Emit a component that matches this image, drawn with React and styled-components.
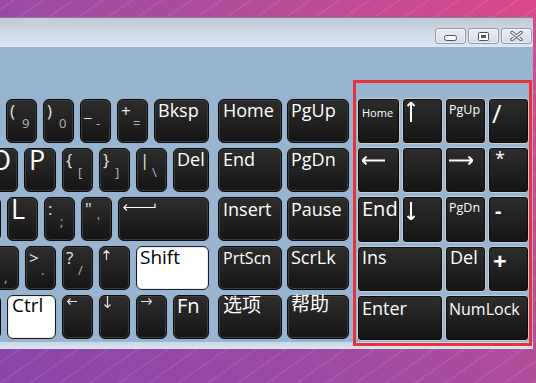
import styled, { createGlobalStyle, css } from 'styled-components';

const GlobalStyle = createGlobalStyle`
  html, body { margin: 0; padding: 0; }
  body {
    width: 536px;
    height: 383px;
    overflow: hidden;
    font-family: "Open Sans", "Noto Sans CJK SC", sans-serif;
  }
`;

const Desktop = styled.div`
  position: relative;
  box-sizing: border-box;
  width: 536px;
  height: 383px;
  padding-top: 17px;
  overflow: hidden;
  background:
    repeating-linear-gradient(145deg, rgba(255,255,255,0) 0 7px, rgba(255,255,255,0.07) 7px 9px, rgba(255,255,255,0) 9px 17px),
    linear-gradient(50deg, #8a46aa 0%, #9c4aa2 40%, #b24c9a 65%, #dc478b 100%);
`;

const Window = styled.div`
  width: 533px;
  display: flex;
  flex-direction: column;
`;

const TitleBar = styled.div`
  box-sizing: border-box;
  height: 30px;
  display: flex;
  justify-content: flex-end;
  align-items: flex-start;
  gap: 2px;
  padding: 10px 1px 0 0;
  border-top: 1px solid #8a8398;
  background: linear-gradient(#c0cad6, #d3deea 60%, #dde8f4);
`;

const CaptionButton = styled.div`
  box-sizing: border-box;
  width: 31px;
  height: 16px;
  display: flex;
  align-items: center;
  justify-content: center;
  border: 1px solid #8e9bab;
  border-radius: 3px;
  background: linear-gradient(#eaeff5, #d2dbe6);
  box-shadow: inset 0 0 0 1px rgba(255, 255, 255, 0.55);
`;

const Panel = styled.div`
  box-sizing: border-box;
  height: 295px;
  display: flex;
  align-items: flex-start;
  gap: 8px;
  padding: 51px 4px 0 0;
  background: #98b4d1;
`;

const BottomEdge = styled.div`
  height: 7px;
  background: linear-gradient(#c9d7e6, #dbe5ef);
`;

const MainKeys = styled.div`
  flex: none;
  width: 209px;
  margin-right: 1px;
  padding-top: 1px;
  display: flex;
  flex-direction: column;
  gap: 5px;
`;

const Row = styled.div`
  display: flex;
  justify-content: flex-end;
  gap: 6px;
`;

const NavKeys = styled.div`
  flex: none;
  padding-top: 1px;
  display: grid;
  grid-template-columns: 64px 62px;
  grid-auto-rows: 44px;
  gap: 5px;
`;

const Numpad = styled.div`
  flex: none;
  height: 243px;
  display: grid;
  grid-template-columns: 43px 41px 41px 41px;
  grid-template-rows: repeat(5, 1fr);
  gap: 3px 2px;
`;

const keyFace = css`
  box-sizing: border-box;
  white-space: nowrap;
  color: #fff;
  background: linear-gradient(#2d2d2d, #222 45%, #151515);
`;

const Key = styled.div`
  ${keyFace}
  flex: none;
  ${p => p.$w && `width: ${p.$w}px;`}
  height: 44px;
  border: 1px solid #0a0a0a;
  border-radius: 6px;
  box-shadow: inset 0 0 0 1px #3c3c3c;
  ${p => p.$white && css`
    background: #fff;
    color: #000;
    border-color: #1c1c1c;
    box-shadow: inset 0 0 0 1px #ececec;
  `}
`;

const NumKey = styled.div`
  ${keyFace}
  grid-column: span ${p => p.$span || 1};
  border: 1px solid #c4ccd6;
  border-radius: 4px;
  box-shadow: inset 0 0 0 1px #0e0e0e;
`;

// baseline of a line box in Open Sans sits at fs * (lh / 2 + 0.388) from its top
const Label = styled.span`
  display: block;
  font-size: ${p => p.$fs || 18}px;
  line-height: ${p => p.$lh || 1};
  margin-top: ${p => ((p.$base ?? 17) - (p.$fs || 18) * ((p.$lh || 1) / 2 + 0.388)).toFixed(1)}px;
  padding-left: ${p => p.$pl ?? 3}px;
  font-weight: ${p => (p.$bold ? 700 : 400)};
  color: ${p => (p.$dim ? '#e4e4e4' : 'inherit')};
`;

const Sub = styled.span`
  display: block;
  font-size: 13px;
  line-height: 0.75;
  margin-top: -0.2px;
  padding-left: 15px;
  color: #b6b6b6;
`;

const Glyph = styled.svg`
  display: block;
  margin: ${p => p.$top}px 0 0 ${p => p.$left}px;
  color: ${p => p.$color || '#fff'};
`;

const Highlight = styled.div`
  position: absolute;
  left: 353px;
  top: 80px;
  width: 179px;
  height: 266px;
  box-sizing: border-box;
  border: 3px solid #e5353b;
  pointer-events: none;
`;

function Arrow({ dir, len, head = 3, sw = 1.2, top = 0, left = 0, color }) {
  const horiz = dir === 'left' || dir === 'right';
  const w = horiz ? len : head * 2 + 1;
  const h = horiz ? head * 2 + 1 : len;
  const c = head + 0.5;
  const e = len - 0.5;
  const paths = {
    left: `M0.5 ${c}H${len} M${head + 0.5} ${c - head}L0.5 ${c}L${head + 0.5} ${c + head}`,
    right: `M0 ${c}H${e} M${e - head} ${c - head}L${e} ${c}L${e - head} ${c + head}`,
    up: `M${c} ${len}V0.5 M${c - head} ${head + 0.5}L${c} 0.5L${c + head} ${head + 0.5}`,
    down: `M${c} 0V${e} M${c - head} ${e - head}L${c} ${e}L${c + head} ${e - head}`,
  };
  return (
    <Glyph $top={top} $left={left} $color={color} width={w} height={h} viewBox={`0 0 ${w} ${h}`}>
      <path d={paths[dir]} fill="none" stroke="currentColor" strokeWidth={sw} />
    </Glyph>
  );
}

function ReturnGlyph() {
  return (
    <Glyph $top={5} $left={4} width="33" height="9" viewBox="0 0 33 9">
      <path d="M32 0.5V4.5H0.8 M3.8 1.5L0.8 4.5L3.8 7.5" fill="none" stroke="currentColor" strokeWidth="1.2" />
    </Glyph>
  );
}

function Sym({ top, sub, w = 31 }) {
  return (
    <Key $w={w}>
      <Label $fs={17} $base={17} $dim>{top}</Label>
      <Sub>{sub}</Sub>
    </Key>
  );
}

function Text({ children, w, fs, base, white, pl, lh }) {
  return (
    <Key $w={w} $white={white}>
      <Label $fs={fs} $base={base} $pl={pl} $lh={lh}>{children}</Label>
    </Key>
  );
}

const BIG = { fs: 27, base: 21, lh: 0.8 };

function App() {
  return (
    <>
      <GlobalStyle />
      <Desktop>
        <Window>
          <TitleBar>
            <CaptionButton>
              <svg width="13" height="6" viewBox="0 0 13 6" style={{ marginTop: 3 }}>
                <rect x="0.5" y="0.5" width="12" height="5" rx="2" fill="#fff" stroke="#4d5463" />
              </svg>
            </CaptionButton>
            <CaptionButton>
              <svg width="11" height="9" viewBox="0 0 11 9">
                <rect x="0.5" y="0.5" width="10" height="8" rx="1" fill="#fff" stroke="#4d5463" />
                <rect x="3" y="3" width="5" height="3" fill="#4d5463" />
              </svg>
            </CaptionButton>
            <CaptionButton>
              <svg width="13" height="10" viewBox="0 0 13 10">
                <path d="M2 1.5L11 8.5M11 1.5L2 8.5" stroke="#565d6b" strokeWidth="3.4" strokeLinecap="round" />
                <path d="M2 1.5L11 8.5M11 1.5L2 8.5" stroke="#fff" strokeWidth="1.5" strokeLinecap="round" />
              </svg>
            </CaptionButton>
          </TitleBar>

          <Panel>
            <MainKeys>
              <Row>
                <Key $w={31} />
                <Sym top="(" sub="9" />
                <Sym top=")" sub="0" />
                <Sym top="_" sub="-" />
                <Sym top="+" sub="=" />
                <Text w={55}>Bksp</Text>
              </Row>
              <Row>
                <Text w={32} {...BIG}>O</Text>
                <Text w={32} {...BIG} pl={4}>P</Text>
                <Sym top="{" sub="[" />
                <Sym top="}" sub="]" />
                <Sym top="|" sub="\" />
                <Text w={36}>Del</Text>
              </Row>
              <Row>
                <Key $w={31} />
                <Text w={31} {...BIG}>L</Text>
                <Sym top=":" sub=";" />
                <Sym top={'"'} sub="'" />
                <Key $w={91}><ReturnGlyph /></Key>
              </Row>
              <Row>
                <Key $w={31}><Sub as="span" style={{ marginTop: 26 }}>,</Sub></Key>
                <Sym top=">" sub="." />
                <Sym top="?" sub="/" />
                <Key $w={31}><Arrow dir="up" len={10} top={3} left={3} color="#e4e4e4" /></Key>
                <Text w={73} white fs={19} base={18}>Shift</Text>
              </Row>
              <Row>
                <Key $w={31} />
                <Text w={49} white fs={19} base={17} pl={4}>Ctrl</Text>
                <Key $w={31}><Arrow dir="left" len={10} top={2} left={4} color="#e4e4e4" /></Key>
                <Key $w={31}><Arrow dir="down" len={12} top={0} left={4} color="#e4e4e4" /></Key>
                <Key $w={31}><Arrow dir="right" len={11} top={2} left={4} color="#e4e4e4" /></Key>
                <Text w={36} fs={20} base={18}>Fn</Text>
              </Row>
            </MainKeys>

            <NavKeys>
              <Text pl={4}>Home</Text>
              <Text>PgUp</Text>
              <Text pl={4}>End</Text>
              <Text>PgDn</Text>
              <Text pl={4} base={18}>Insert</Text>
              <Text base={18}>Pause</Text>
              <Text pl={4} fs={16}>PrtScn</Text>
              <Text>ScrLk</Text>
              <Text pl={4} fs={19} base={17}>选项</Text>
              <Text fs={19} base={16}>帮助</Text>
            </NavKeys>

            <Numpad>
              <NumKey><Label $fs={11} $base={18} $pl={4}>Home</Label></NumKey>
              <NumKey><Arrow dir="up" len={20} head={3.5} sw={2} top={3} left={4} /></NumKey>
              <NumKey><Label $fs={12.5} $base={16} $pl={3}>PgUp</Label></NumKey>
              <NumKey><Label $fs={26} $base={24} $pl={3} $lh={0.8}>/</Label></NumKey>

              <NumKey><Arrow dir="left" len={23} head={4} sw={2} top={8} left={4} /></NumKey>
              <NumKey />
              <NumKey><Arrow dir="right" len={24} head={4} sw={2} top={8} left={3} /></NumKey>
              <NumKey><Label $fs={18} $base={17} $pl={6}>*</Label></NumKey>

              <NumKey><Label $fs={20} $base={19} $pl={4}>End</Label></NumKey>
              <NumKey><Arrow dir="down" len={18} head={3.5} sw={2} top={5} left={4} /></NumKey>
              <NumKey><Label $fs={12.5} $base={16} $pl={3}>PgDn</Label></NumKey>
              <NumKey><Label $fs={20} $base={21} $pl={6} $bold>-</Label></NumKey>

              <NumKey $span={2}><Label $fs={18} $base={17} $pl={4}>Ins</Label></NumKey>
              <NumKey><Label $fs={18} $base={17} $pl={4}>Del</Label></NumKey>
              <NumKey><Label $fs={24} $base={24} $pl={4} $bold $lh={0.9}>+</Label></NumKey>

              <NumKey $span={2}><Label $fs={18} $base={19} $pl={4}>Enter</Label></NumKey>
              <NumKey $span={2}><Label $fs={16} $base={19} $pl={3}>NumLock</Label></NumKey>
            </Numpad>
          </Panel>
          <BottomEdge />
        </Window>
        <Highlight />
      </Desktop>
    </>
  );
}

export default App;
